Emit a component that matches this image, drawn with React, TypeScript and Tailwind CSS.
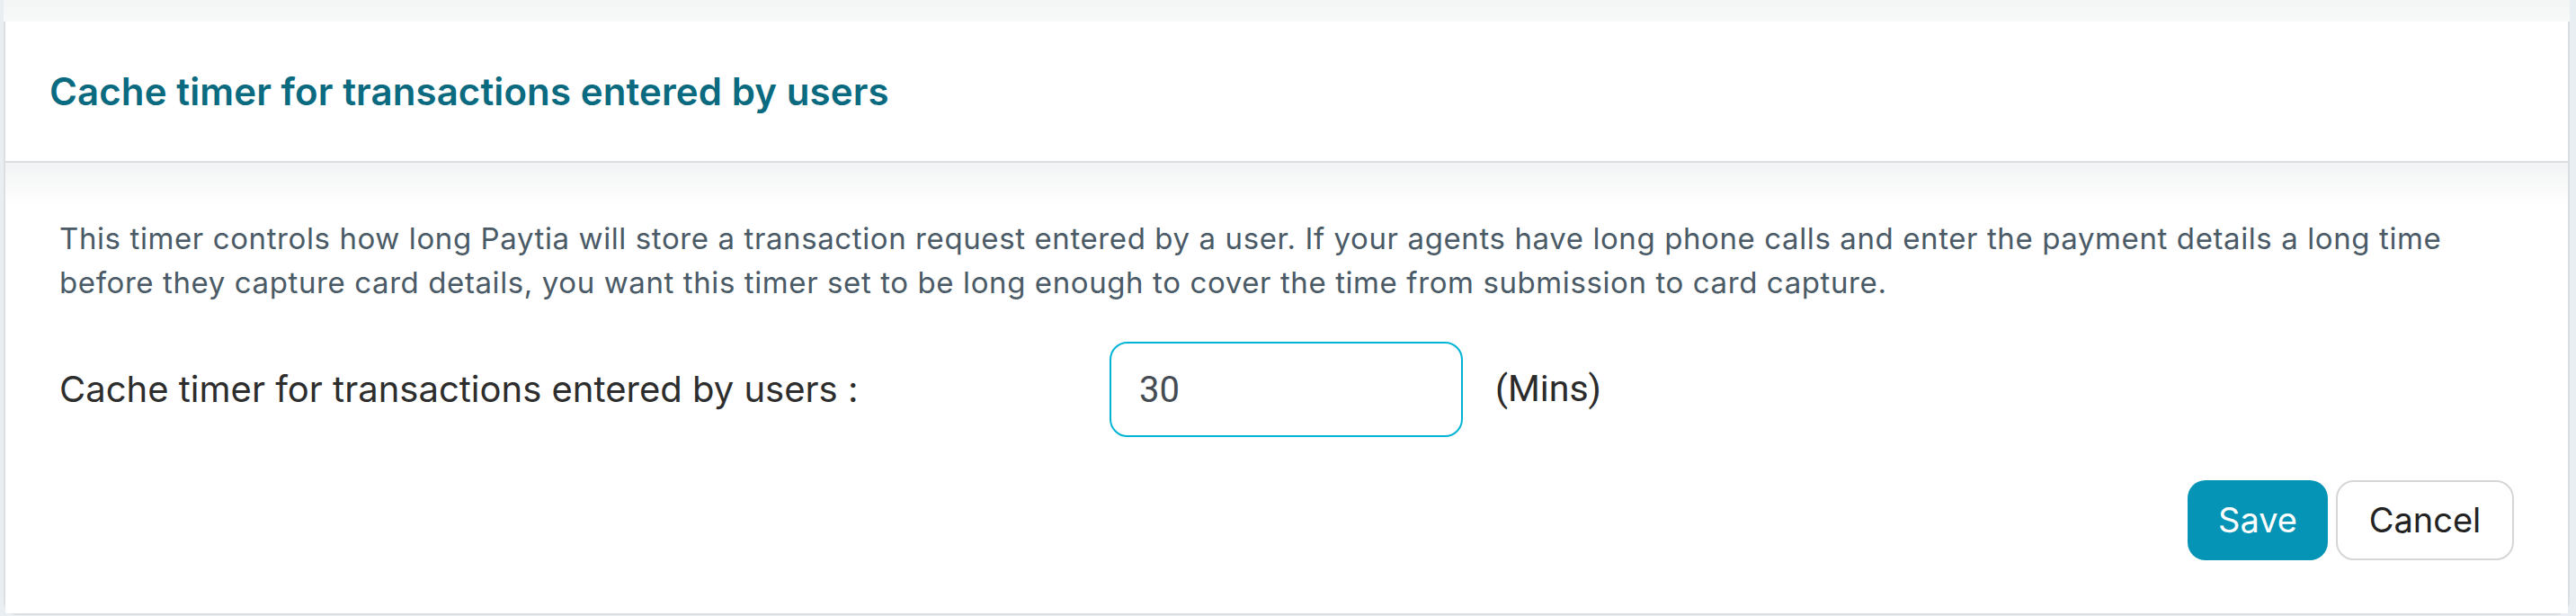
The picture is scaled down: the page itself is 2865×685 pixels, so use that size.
import React, { useState } from "react";

const App: React.FC = () => {
  const [minutes, setMinutes] = useState("30");

  return (
    <div className="min-h-screen bg-[#e9eef3] pl-[4px] pr-[7px] font-['Inter','Noto_Sans',sans-serif]">
      {/* shadow band left by the section above */}
      <div className="h-[24px] bg-gradient-to-b from-[#f4f5f5] to-[#f8f9f9]" />

      <div className="bg-white border-x-2 border-b-2 border-[#dcdfe2] rounded-b-[16px]">
        <div className="h-[157px] flex items-center px-[49px] border-b-2 border-[#dcdee0]">
          <h2 className="text-[42px] font-semibold text-[#0a6a80] tracking-[0.1px]">
            Cache timer for transactions entered by users
          </h2>
        </div>

        <div className="bg-gradient-to-b from-[#f2f3f4] to-white to-[48px] bg-no-repeat px-[60px] pt-[60px] pb-[59px]">
          <p className="text-[33px] leading-[49px] tracking-[0.6px] text-[#4a5a66]">
            This timer controls how long Paytia will store a transaction request entered by a user. If your agents have long phone calls and enter the payment details a long time before they capture card details, you want this timer set to be long enough to cover the time from submission to card capture.
          </p>

          <div className="flex items-center mt-[41px]">
            <label className="w-[1168px] text-[40px] text-[#2d2d2d]">
              Cache timer for transactions entered by users :
            </label>
            <input
              value={minutes}
              onChange={(e) => setMinutes(e.target.value)}
              className="w-[393px] h-[106px] px-[31px] rounded-[20px] border-2 border-[#00b4d6] font-['Roboto',sans-serif] text-[40px] text-[#444b52] outline-none"
            />
            <span className="ml-[36px] font-['Roboto',sans-serif] text-[41px] text-[#2b2b2b]">(Mins)</span>
          </div>

          <div className="flex justify-end gap-[9px] mt-[48px]">
            <button className="w-[156px] h-[89px] rounded-[20px] bg-[#0594b5] text-white text-[38px]">
              Save
            </button>
            <button className="w-[198px] h-[89px] rounded-[20px] border-2 border-[#d6d6d6] bg-white text-[#222] text-[38px]">
              Cancel
            </button>
          </div>
        </div>
      </div>
    </div>
  );
};

export default App;
